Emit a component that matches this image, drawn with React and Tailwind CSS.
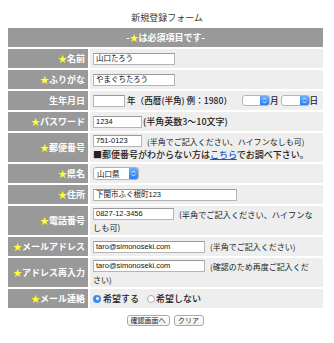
import React from "react";

const Star = () => <span className="text-[#ffff33]">★</span>;

function Label({ children, star = true }) {
  return (
    <td className="w-[80px] bg-[#999999] text-right align-middle pr-[3px] py-0 text-white font-bold text-[9px] leading-[12px] whitespace-nowrap">
      {star && <Star />}
      {children}
    </td>
  );
}

function Val({ children }) {
  return (
    <td className="bg-[#eeeeee] align-middle px-[3px] py-[1px] text-[#222] leading-[13px]">
      {children}
    </td>
  );
}

function Line({ children, className = "" }) {
  return <div className={`flex items-center h-[13px] whitespace-nowrap ${className}`}>{children}</div>;
}

function Input({ w, value = "", h = "h-[12px]" }) {
  return (
    <span
      className={`inline-flex items-center ${h} bg-white border border-[#b5b5b5] border-t-[#999] pl-[2px] text-[7.5px] leading-none text-[#111] font-['Liberation_Sans','Noto_Sans_CJK_JP',sans-serif] shrink-0 overflow-hidden whitespace-nowrap`}
      style={{ width: w }}
    >
      {value}
    </span>
  );
}

function Arrows() {
  return (
    <svg width="5" height="7" viewBox="0 0 5 7" fill="none">
      <path d="M0.8 2.6 L2.5 0.9 L4.2 2.6" stroke="white" strokeWidth="0.9" />
      <path d="M0.8 4.4 L2.5 6.1 L4.2 4.4" stroke="white" strokeWidth="0.9" />
    </svg>
  );
}

function Select({ w, value = "", h = "h-[12px]" }) {
  return (
    <span
      className={`inline-flex items-stretch ${h} bg-white border border-[#b5b5b5] rounded-[3px] overflow-hidden shrink-0`}
      style={{ width: w }}
    >
      <span className="flex-1 flex items-center pl-[3px] text-[7.5px] leading-none text-[#111] whitespace-nowrap">
        {value}
      </span>
      <span className="w-[9px] flex items-center justify-center bg-gradient-to-b from-[#69aefa] to-[#2a7ef2]">
        <Arrows />
      </span>
    </span>
  );
}

function Radio({ on }) {
  return on ? (
    <span className="inline-flex w-[8px] h-[8px] rounded-full bg-[#3a8af5] items-center justify-center shrink-0">
      <span className="w-[3px] h-[3px] rounded-full bg-white" />
    </span>
  ) : (
    <span className="inline-block w-[8px] h-[8px] rounded-full bg-white border border-[#aaa] shrink-0" />
  );
}

export default function App() {
  return (
    <div className="w-[334px] h-[343px] bg-white font-['Noto_Sans_CJK_JP',sans-serif] overflow-hidden">
      <div className="pt-[12px] h-[24px] text-center text-[9px] leading-[12px] text-[#3a3a32]">
        新規登録フォーム
      </div>
      <table className="mt-[2px] ml-[6px] w-[319px] border-separate border-spacing-[2px] table-fixed">
        <colgroup>
          <col className="w-[80px]" />
          <col />
        </colgroup>
        <tbody>
          <tr className="h-[19px]">
            <td colSpan={2} className="bg-[#999999] text-center text-white font-bold text-[9px] leading-[12px]">
              -<Star />は必須項目です-
            </td>
          </tr>
          <tr className="h-[19px]">
            <Label>名前</Label>
            <Val>
              <Line><Input w={82} value="山口たろう" /></Line>
            </Val>
          </tr>
          <tr className="h-[19px]">
            <Label>ふりがな</Label>
            <Val>
              <Line><Input w={82} value="やまぐちたろう" /></Line>
            </Val>
          </tr>
          <tr className="h-[19px]">
            <Label star={false}>生年月日</Label>
            <Val>
              <Line className="text-[8.6px] font-medium">
                <Input w={32} />
                <span className="ml-[2px]">年（西暦(半角) 例：1980）</span>
                <span className="ml-[10px] flex"><Select w={28} h="h-[11px]" /></span>
                <span>月</span>
                <span className="ml-[2px] flex"><Select w={29} h="h-[11px]" /></span>
                <span>日</span>
              </Line>
            </Val>
          </tr>
          <tr className="h-[19px]">
            <Label>パスワード</Label>
            <Val>
              <Line>
                <Input w={49} value="1234" />
                <span className="ml-[1px] text-[9px] font-medium">(半角英数3～10文字)</span>
              </Line>
            </Val>
          </tr>
          <tr className="h-[29px]">
            <Label>郵便番号</Label>
            <Val>
              <Line>
                <Input w={49} value="751-0123" />
                <span className="ml-[5px] text-[8px]">(半角でご記入ください、ハイフンなしも可)</span>
              </Line>
              <Line className="text-[9px] font-medium">
                <span>■郵便番号がわからない方は<span className="text-[#1f55c7] underline">こちら</span>でお調べ下さい。</span>
              </Line>
            </Val>
          </tr>
          <tr className="h-[19px]">
            <Label>県名</Label>
            <Val>
              <Line><Select w={46} h="h-[13px]" value="山口県" /></Line>
            </Val>
          </tr>
          <tr className="h-[19px]">
            <Label>住所</Label>
            <Val>
              <Line><Input w={144} value="下関市ふぐ根町123" /></Line>
            </Val>
          </tr>
          <tr className="h-[29px]">
            <Label>電話番号</Label>
            <Val>
              <Line>
                <Input w={81} value="0827-12-3456" />
                <span className="ml-[5px] text-[8.2px]">(半角でご記入ください、ハイフンな</span>
              </Line>
              <Line className="text-[8.2px]">しも可)</Line>
            </Val>
          </tr>
          <tr className="h-[19px]">
            <Label>メールアドレス</Label>
            <Val>
              <Line>
                <Input w={112} value="taro@simonoseki.com" />
                <span className="ml-[5px] text-[8px]">(半角でご記入ください)</span>
              </Line>
            </Val>
          </tr>
          <tr className="h-[29px]">
            <Label>アドレス再入力</Label>
            <Val>
              <Line>
                <Input w={112} value="taro@simonoseki.com" />
                <span className="ml-[5px] text-[8px]">(確認のため再度ご記入くだ</span>
              </Line>
              <Line className="text-[8px]">さい)</Line>
            </Val>
          </tr>
          <tr className="h-[19px]">
            <Label>メール連絡</Label>
            <Val>
              <Line className="text-[9px] font-medium">
                <Radio on />
                <span className="ml-[2px]">希望する</span>
                <span className="ml-[8px] flex"><Radio /></span>
                <span className="ml-[1px]">希望しない</span>
              </Line>
            </Val>
          </tr>
        </tbody>
      </table>
      <div className="mt-[5px] flex justify-center gap-[4px] pr-[4px]">
        <span className="inline-flex items-center justify-center w-[43px] h-[11px] rounded-[3px] border border-[#aaa] bg-gradient-to-b from-white to-[#f0f0f0] text-[7px] leading-none text-[#222]">
          確認画面へ
        </span>
        <span className="inline-flex items-center justify-center w-[30px] h-[11px] rounded-[3px] border border-[#aaa] bg-gradient-to-b from-white to-[#f0f0f0] text-[7px] leading-none text-[#222]">
          クリア
        </span>
      </div>
    </div>
  );
}
